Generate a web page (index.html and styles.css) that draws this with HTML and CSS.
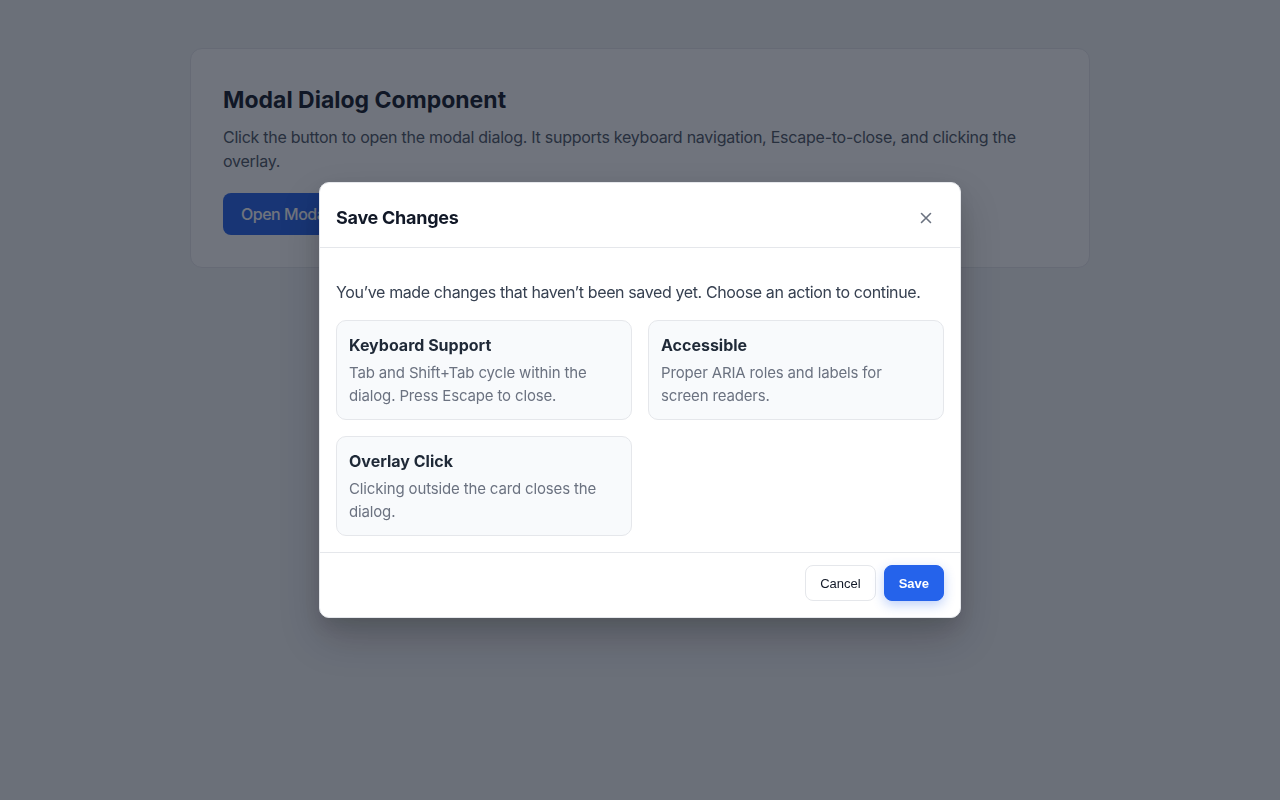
FILE: index.html
```html
<!DOCTYPE html>
<html lang="en">
<head>
<meta charset="utf-8">
<title>Modal Dialog Component</title>
<link rel="stylesheet" href="styles.css">
</head>
<body>
<main class="page">
  <section class="demo-card">
    <h1 class="demo-title">Modal Dialog Component</h1>
    <p class="demo-text">Click the button to open the modal dialog. It supports keyboard navigation, Escape-to-close, and clicking the overlay.</p>
    <button class="open-btn" type="button">Open Modal</button>
  </section>
</main>

<div class="overlay">
  <div class="modal" role="dialog" aria-modal="true" aria-labelledby="modal-title">
    <header class="modal-header">
      <h2 id="modal-title" class="modal-title">Save Changes</h2>
      <button class="close-btn" type="button" aria-label="Close">
        <svg width="14" height="14" viewBox="0 0 14 14" fill="none" stroke="currentColor" stroke-width="1.6" stroke-linecap="round">
          <path d="M2.5 2.5 L11.5 11.5 M11.5 2.5 L2.5 11.5"/>
        </svg>
      </button>
    </header>
    <div class="modal-body">
      <p class="modal-text">You’ve made changes that haven’t been saved yet. Choose an action to continue.</p>
      <div class="feature-grid">
        <div class="feature">
          <h3 class="feature-title">Keyboard Support</h3>
          <p class="feature-text">Tab and Shift+Tab cycle within the dialog. Press Escape to close.</p>
        </div>
        <div class="feature">
          <h3 class="feature-title">Accessible</h3>
          <p class="feature-text">Proper ARIA roles and labels for screen readers.</p>
        </div>
        <div class="feature">
          <h3 class="feature-title">Overlay Click</h3>
          <p class="feature-text">Clicking outside the card closes the dialog.</p>
        </div>
      </div>
    </div>
    <footer class="modal-footer">
      <button class="btn btn-secondary" type="button">Cancel</button>
      <button class="btn btn-primary" type="button">Save</button>
    </footer>
  </div>
</div>
</body>
</html>
```

FILE: styles.css
```css
* { box-sizing: border-box; }

html, body {
  margin: 0;
  padding: 0;
}

body {
  font-family: Inter, "Noto Sans", "Liberation Sans", sans-serif;
  background: #f3f4f6;
  color: #111827;
  min-height: 800px;
}

.page {
  padding-top: 48px;
}

.demo-card {
  width: 900px;
  margin: 0 auto;
  background: #ffffff;
  border: 1px solid #e5e7eb;
  border-radius: 12px;
  padding: 32px;
}

.demo-title {
  margin: 0 0 6px;
  font-size: 23px;
  line-height: 38px;
  font-weight: 700;
  color: #111827;
}

.demo-text {
  margin: 0 0 20px;
  font-size: 16px;
  line-height: 24px;
  letter-spacing: -0.016em;
  color: #4b5563;
}

.open-btn {
  font-family: Inter, "Liberation Sans", sans-serif;
  font-size: 16px;
  font-weight: 500;
  letter-spacing: -0.03em;
  height: 42px;
  padding: 0 18px;
  border: none;
  border-radius: 8px;
  background: #2563eb;
  color: #ffffff;
}

.overlay {
  position: fixed;
  inset: 0;
  background: rgba(17, 24, 39, 0.6);
  display: flex;
  align-items: center;
  justify-content: center;
}

.modal {
  width: 642px;
  background: #ffffff;
  border: 1px solid #e5e7eb;
  border-radius: 10px;
  box-shadow: 0 20px 40px rgba(0, 0, 0, 0.2), 0 8px 16px rgba(0, 0, 0, 0.08);
  overflow: hidden;
}

.modal-header {
  display: flex;
  align-items: center;
  justify-content: space-between;
  padding: 19px 18px 13px 16px;
  border-bottom: 1px solid #e5e7eb;
}

.modal-title {
  margin: 0;
  font-size: 18px;
  line-height: 32px;
  font-weight: 700;
  letter-spacing: -0.015em;
  color: #111827;
}

.close-btn {
  width: 32px;
  height: 32px;
  display: flex;
  align-items: center;
  justify-content: center;
  padding: 0;
  border: none;
  background: transparent;
  color: #6b7280;
  border-radius: 6px;
}

.modal-body {
  padding: 32px 16px 16px;
}

.modal-text {
  margin: 0 0 16px;
  font-size: 16px;
  line-height: 24px;
  letter-spacing: -0.024em;
  color: #374151;
}

.feature-grid {
  display: grid;
  grid-template-columns: 1fr 1fr;
  gap: 16px;
}

.feature {
  background: #f8fafc;
  border: 1px solid #e5e7eb;
  border-radius: 10px;
  padding: 12px;
}

.feature-title {
  margin: 0 0 4px;
  font-size: 16px;
  line-height: 24px;
  font-weight: 650;
  color: #1f2937;
}

.feature-text {
  margin: 0;
  font-size: 15px;
  line-height: 23px;
  letter-spacing: -0.01em;
  color: #6b7280;
}

.modal-footer {
  display: flex;
  justify-content: flex-end;
  gap: 8px;
  padding: 12px 16px 16px;
  border-top: 1px solid #e5e7eb;
}

.btn {
  font-family: "Liberation Sans", Arial, sans-serif;
  font-size: 13px;
  height: 36px;
  padding: 0 14px;
  border-radius: 8px;
}

.btn-secondary {
  background: #ffffff;
  border: 1px solid #e5e7eb;
  color: #111827;
}

.btn-primary {
  background: #2563eb;
  border: 1px solid #2563eb;
  color: #ffffff;
  font-weight: 700;
  box-shadow: 0 4px 12px rgba(37, 99, 235, 0.3);
}
```
